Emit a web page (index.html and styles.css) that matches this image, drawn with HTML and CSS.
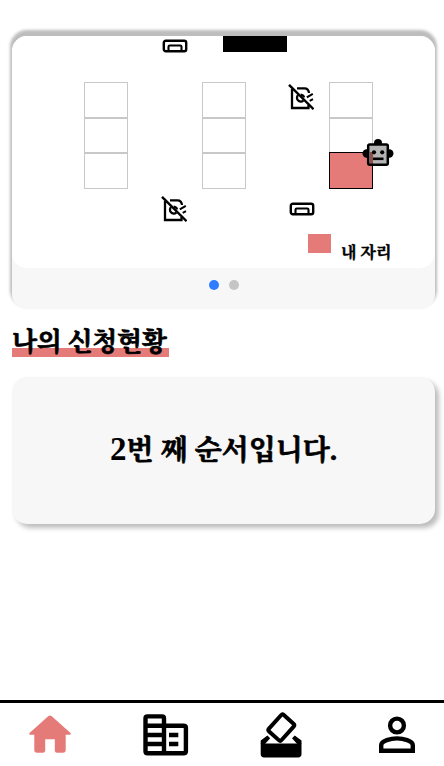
FILE: index.html
```html
<!DOCTYPE html>
<html lang="ko">
<head>
<meta charset="utf-8">
<title>나의 신청현황</title>
<link rel="stylesheet" href="styles.css">
</head>
<body>
<svg class="defs" aria-hidden="true">
  <symbol id="desk" viewBox="0 0 26 14">
    <rect x="1.8" y="1.8" width="22.4" height="10.4" rx="2" fill="none" stroke="#000" stroke-width="2.4"/>
    <path d="M6.5 12V7.8Q6.5 6.5 7.8 6.5H18.2Q19.5 6.5 19.5 7.8V12" fill="none" stroke="#000" stroke-width="2.1"/>
  </symbol>
  <symbol id="printer" viewBox="0 0 26 26">
    <g fill="none" stroke="#000" stroke-width="2.3">
      <path d="M4 5V24H20.5V21M9 4.3H16.5Q20.5 4.3 21 9"/>
      <path d="M10.2 11A3.7 3.7 0 0 0 15.3 16.6M12.7 10.6Q15.6 10.9 16 13.5"/>
      <path d="M18.8 13.4L24.8 9.8M21.7 16.8L25 15.2" stroke-width="2"/>
      <path d="M1 .8L25.6 25.2" stroke-width="2.4"/>
    </g>
  </symbol>
</svg>
<main class="content">
  <section class="slider">
    <div class="plan">
      <div class="column"><i class="seat"></i><i class="seat"></i><i class="seat"></i></div>
      <div class="column"><i class="seat"></i><i class="seat"></i><i class="seat"></i></div>
      <div class="column"><i class="seat"></i><i class="seat"></i><i class="seat mine"></i></div>
      <div class="board"></div>
      <svg class="pin desk-top"><use href="#desk"/></svg>
      <svg class="pin desk-bottom"><use href="#desk"/></svg>
      <svg class="pin printer-top"><use href="#printer"/></svg>
      <svg class="pin printer-bottom"><use href="#printer"/></svg>
      <svg class="pin robot" viewBox="0 0 32 28">
        <circle cx="16" cy="4" r="4"/><circle cx="4.7" cy="14.5" r="4.2"/><circle cx="27.3" cy="14.5" r="4.2"/>
        <rect x="6.2" y="5.5" width="19.6" height="20.2" rx="1.5" fill="#b4b4b4"/>
        <rect x="8" y="13" width="3" height="12" fill="#924e4d"/>
        <rect x="6.2" y="5.5" width="19.6" height="20.2" rx="1.5" fill="none" stroke="#000" stroke-width="2.5"/>
        <circle cx="12" cy="13.3" r="2.1"/><circle cx="20.2" cy="13.3" r="2.1"/>
        <path d="M11 19.8H21.5" stroke="#000" stroke-width="2.6"/>
      </svg>
      <div class="legend"><i class="swatch"></i><span class="legend-text">내 자리</span></div>
    </div>
    <div class="dots"><i class="dot active"></i><i class="dot"></i></div>
  </section>
  <h1 class="title">나의 신청현황</h1>
  <section class="status"><p class="order"><span class="number">2</span>번 째 순서입니다.</p></section>
</main>
<nav class="nav">
  <svg class="tab" viewBox="0 0 50 54"><path fill="#e57b79" d="M23.2 6.2Q25 4.6 26.8 6.2L45.5 23Q46.5 24.8 45 24.8H40.7V40Q40.7 42.7 38 42.7H32Q29.8 42.7 29.8 40V29.3H20.2V40Q20.2 42.7 18 42.7H12Q9.3 42.7 9.3 40V24.8H5Q3.5 24.8 4.5 23Z"/></svg>
  <svg class="tab" viewBox="1 0 50 54">
    <g fill="none" stroke="#000" stroke-width="4.4">
      <path d="M24 16V8.4Q24 6.4 22 6.4H7.5Q5.5 6.4 5.5 8.4V41.3Q5.5 43.3 7.5 43.3H43.5Q45.9 43.3 45.9 41.3V17.7Q45.9 15.7 43.5 15.7H24V43"/>
      <path d="M5 15.7H24M5 25H24M5 34H24M29 25H38.3M29 34H38.3"/>
    </g>
  </svg>
  <svg class="tab" viewBox="0 0 50 54">
    <rect x="16.8" y="6.6" width="17" height="22" rx="2" transform="rotate(42 25.3 17.6)" fill="none" stroke="#000" stroke-width="4"/>
    <path d="M4.7 34V30.6L11.4 25.4L14.2 28.3L9 34ZM45.5 34V30.6L38.8 25.4L36 28.3L41.2 34Z"/>
    <path d="M4.7 33.5H45.5V44Q45.5 47.4 42.1 47.4H8.1Q4.7 47.4 4.7 44Z"/>
  </svg>
  <svg class="tab" viewBox="0 0 50 54">
    <g fill="none" stroke="#000" stroke-width="4.4"><circle cx="25" cy="15.5" r="6.9"/><path d="M9.2 40.7V35.3C9.2 30.5 19 28.4 25 28.4S40.8 30.5 40.8 35.3V40.7Z"/></g>
  </svg>
</nav>
</body>
</html>
```
FILE: styles.css
```css
* { box-sizing: border-box; }
body {
  margin: 0;
  height: 766px;
  display: flex;
  flex-direction: column;
  background: #fff;
  color: #000;
  font-family: "Liberation Serif", "Noto Serif CJK KR", "Noto Sans CJK KR", serif;
  overflow: hidden;
}
.defs { position: absolute; width: 0; height: 0; }
.content { flex: 1; padding: 36px 9px 0 12px; }
.slider {
  height: 273px;
  border-radius: 15px;
  background: #f7f7f7;
  box-shadow: 0 -4px 3px 2px #bdbdbd;
}
.plan {
  position: relative;
  height: 232px;
  padding: 46px 62px 0 72px;
  display: flex;
  justify-content: space-between;
  align-items: flex-start;
  border-radius: 15px;
  background: #fff;
}
.column { width: 44px; display: grid; grid-template-rows: 36px 35px 36px; }
.column:nth-child(2) { margin-right: 9px; }
.seat { border: 1px solid #c8c8c8; }
.seat.mine { margin-top: -1px; background: #e57b79; border-color: #000; }
.board { position: absolute; left: 211px; top: 0; width: 64px; height: 16px; background: #000; }
.pin { position: absolute; }
.desk-top, .desk-bottom { width: 26px; height: 14px; }
.printer-top, .printer-bottom { width: 26px; height: 26px; }
.desk-top { left: 150px; top: 3px; }
.desk-bottom { left: 277px; top: 166px; }
.printer-top { left: 276px; top: 48px; }
.printer-bottom { left: 149px; top: 160px; }
.robot { left: 350px; top: 103px; width: 32px; height: 28px; }
.legend { position: absolute; left: 296px; top: 198px; display: flex; gap: 10px; }
.swatch { width: 23px; height: 19px; background: #e57b79; }
.legend-text {
  padding-top: 7px;
  font-size: 16px;
  font-weight: 700;
  line-height: 24px;
  white-space: nowrap;
  -webkit-text-stroke: 0.5px #000;
}
.dots { display: flex; justify-content: center; gap: 10px; padding-top: 12px; }
.dot { width: 10px; height: 10px; border-radius: 50%; background: #c5c5c5; }
.dot.active { background: #2f7cff; }
.title {
  width: 157px;
  height: 30px;
  margin: 18px 0 20px;
  font-size: 26px;
  line-height: 32px;
  letter-spacing: -0.4px;
  white-space: nowrap;
  background: linear-gradient(#e57b79, #e57b79) 0 21px / 100% 9px no-repeat;
  -webkit-text-stroke: 0.7px #000;
}
.status {
  height: 147px;
  display: flex;
  align-items: center;
  justify-content: center;
  border-radius: 15px;
  background: #f7f7f7;
  box-shadow: 4px 4px 5px #bdbdbd;
}
.order {
  margin: 0;
  font-size: 28px;
  font-weight: 700;
  line-height: 40px;
  white-space: nowrap;
  -webkit-text-stroke: 0.7px #000;
}
.number { font-size: 33px; line-height: 1; -webkit-text-stroke: 0; }
.nav {
  height: 66px;
  padding: 7px 22px 0 25px;
  display: flex;
  justify-content: space-between;
  border-top: 3px solid #000;
}
.tab { width: 50px; height: 54px; }
```
